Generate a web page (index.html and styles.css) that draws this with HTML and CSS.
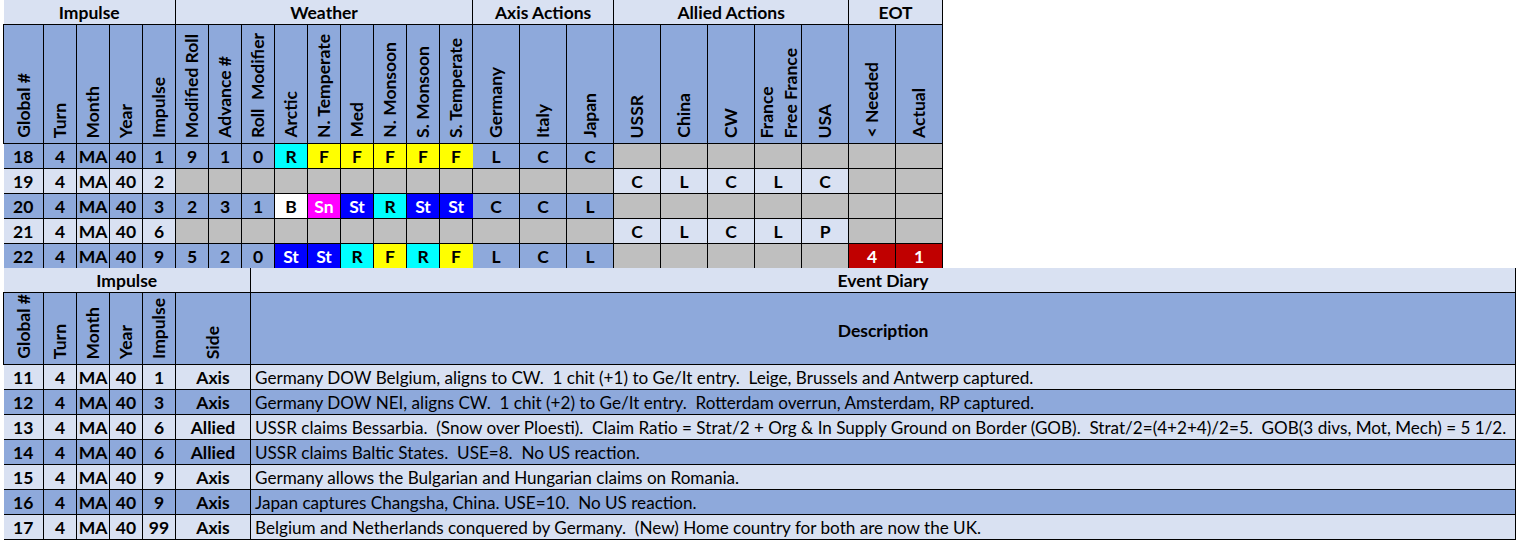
FILE: index.html
```html
<!DOCTYPE html>
<html>
<head>
<meta charset="utf-8">
<link rel="stylesheet" href="styles.css">
</head>
<body>
<div class="sheet">
<table class="grid top">
  <colgroup>
    <col class="w40"><col class="w33" span="13"><col class="w47" span="10">
  </colgroup>
  <tr class="grp">
    <th colspan="5">Impulse</th><th colspan="9">Weather</th><th colspan="3">Axis Actions</th><th colspan="5">Allied Actions</th><th colspan="2">EOT</th>
  </tr>
  <tr class="hdr">
    <th><span class="v">Global #</span></th>
    <th><span class="v">Turn</span></th>
    <th><span class="v">Month</span></th>
    <th><span class="v">Year</span></th>
    <th><span class="v">Impulse</span></th>
    <th><span class="v">Modified Roll</span></th>
    <th><span class="v">Advance #</span></th>
    <th><span class="v">Roll  Modifier</span></th>
    <th><span class="v">Arctic</span></th>
    <th><span class="v">N. Temperate</span></th>
    <th><span class="v">Med</span></th>
    <th><span class="v">N. Monsoon</span></th>
    <th><span class="v">S. Monsoon</span></th>
    <th><span class="v">S. Temperate</span></th>
    <th><span class="v">Germany</span></th>
    <th><span class="v">Italy</span></th>
    <th><span class="v">Japan</span></th>
    <th><span class="v">USSR</span></th>
    <th><span class="v">China</span></th>
    <th><span class="v">CW</span></th>
    <th><span class="v two">France<br>Free France</span></th>
    <th><span class="v">USA</span></th>
    <th><span class="v">&lt; Needed</span></th>
    <th><span class="v">Actual</span></th>
  </tr>
  <tr class="row">
    <td class="m">18</td><td class="m">4</td><td class="m">MA</td><td class="m">40</td><td class="m">1</td>
    <td class="m">9</td><td class="m">1</td><td class="m">0</td>
    <td class="cy">R</td><td class="ye">F</td><td class="ye">F</td><td class="ye">F</td><td class="ye">F</td><td class="ye edge-ye">F</td>
    <td class="m">L</td><td class="m">C</td><td class="m">C</td>
    <td class="g"></td><td class="g"></td><td class="g"></td><td class="g"></td><td class="g"></td>
    <td class="g"></td><td class="g"></td>
  </tr>
  <tr class="row">
    <td class="l">19</td><td class="l">4</td><td class="l">MA</td><td class="l">40</td><td class="l">2</td>
    <td class="g"></td><td class="g"></td><td class="g"></td>
    <td class="g"></td><td class="g"></td><td class="g"></td><td class="g"></td><td class="g"></td><td class="g"></td>
    <td class="g"></td><td class="g"></td><td class="g"></td>
    <td class="l">C</td><td class="l">L</td><td class="l">C</td><td class="l">L</td><td class="l">C</td>
    <td class="g"></td><td class="g"></td>
  </tr>
  <tr class="row">
    <td class="m">20</td><td class="m">4</td><td class="m">MA</td><td class="m">40</td><td class="m">3</td>
    <td class="m">2</td><td class="m">3</td><td class="m">1</td>
    <td class="wh">B</td><td class="mg">Sn</td><td class="bl">St</td><td class="cy">R</td><td class="bl">St</td><td class="bl edge-bl">St</td>
    <td class="m">C</td><td class="m">C</td><td class="m">L</td>
    <td class="g"></td><td class="g"></td><td class="g"></td><td class="g"></td><td class="g"></td>
    <td class="g"></td><td class="g"></td>
  </tr>
  <tr class="row">
    <td class="l">21</td><td class="l">4</td><td class="l">MA</td><td class="l">40</td><td class="l">6</td>
    <td class="g"></td><td class="g"></td><td class="g"></td>
    <td class="g"></td><td class="g"></td><td class="g"></td><td class="g"></td><td class="g"></td><td class="g"></td>
    <td class="g"></td><td class="g"></td><td class="g"></td>
    <td class="l">C</td><td class="l">L</td><td class="l">C</td><td class="l">L</td><td class="l">P</td>
    <td class="g"></td><td class="g"></td>
  </tr>
  <tr class="row last">
    <td class="m">22</td><td class="m">4</td><td class="m">MA</td><td class="m">40</td><td class="m">9</td>
    <td class="m">5</td><td class="m">2</td><td class="m">0</td>
    <td class="bl">St</td><td class="bl">St</td><td class="cy">R</td><td class="ye">F</td><td class="cy">R</td><td class="ye edge-ye">F</td>
    <td class="m">L</td><td class="m">C</td><td class="m">L</td>
    <td class="g"></td><td class="g"></td><td class="g"></td><td class="g"></td><td class="g"></td>
    <td class="rd">4</td><td class="rd">1</td>
  </tr>
</table>

<table class="grid bottom">
  <colgroup>
    <col class="w40"><col class="w33" span="4"><col class="w75"><col class="wdesc">
  </colgroup>
  <tr class="grp">
    <th colspan="6">Impulse</th><th>Event Diary</th>
  </tr>
  <tr class="hdr2">
    <th><span class="v">Global #</span></th>
    <th><span class="v">Turn</span></th>
    <th><span class="v">Month</span></th>
    <th><span class="v">Year</span></th>
    <th><span class="v">Impulse</span></th>
    <th><span class="v">Side</span></th>
    <th class="desc-h">Description</th>
  </tr>
  <tr class="row l">
    <td>11</td><td>4</td><td>MA</td><td>40</td><td>1</td><td>Axis</td>
    <td class="desc">Germany DOW Belgium, aligns to CW.  1 chit (+1) to Ge/It entry.  Leige, Brussels and Antwerp captured.</td>
  </tr>
  <tr class="row m">
    <td>12</td><td>4</td><td>MA</td><td>40</td><td>3</td><td>Axis</td>
    <td class="desc">Germany DOW NEI, aligns CW.  1 chit (+2) to Ge/It entry.  Rotterdam overrun, Amsterdam, RP captured.</td>
  </tr>
  <tr class="row l">
    <td>13</td><td>4</td><td>MA</td><td>40</td><td>6</td><td>Allied</td>
    <td class="desc">USSR claims Bessarbia.  (Snow over Ploesti).  Claim Ratio = Strat/2 + Org &amp; In Supply Ground on Border (GOB).  Strat/2=(4+2+4)/2=5.  GOB(3 divs, Mot, Mech) = 5 1/2.</td>
  </tr>
  <tr class="row m">
    <td>14</td><td>4</td><td>MA</td><td>40</td><td>6</td><td>Allied</td>
    <td class="desc">USSR claims Baltic States.  USE=8.  No US reaction.</td>
  </tr>
  <tr class="row l">
    <td>15</td><td>4</td><td>MA</td><td>40</td><td>9</td><td>Axis</td>
    <td class="desc">Germany allows the Bulgarian and Hungarian claims on Romania.</td>
  </tr>
  <tr class="row m">
    <td>16</td><td>4</td><td>MA</td><td>40</td><td>9</td><td>Axis</td>
    <td class="desc">Japan captures Changsha, China. USE=10.  No US reaction.</td>
  </tr>
  <tr class="row l">
    <td>17</td><td>4</td><td>MA</td><td>40</td><td>99</td><td>Axis</td>
    <td class="desc">Belgium and Netherlands conquered by Germany.  (New) Home country for both are now the UK.</td>
  </tr>
</table>
</div>
</body>
</html>
```

FILE: styles.css
```css
html, body {
  margin: 0;
  padding: 0;
  background: #ffffff;
}
body {
  font-family: "Lato", "Liberation Sans", sans-serif;
  color: #000;
}
.sheet {
  padding-left: 3px;
}
.grid {
  border-collapse: collapse;
  table-layout: fixed;
}
.grid th, .grid td {
  border: 1px solid #000;
  padding: 0;
  font-weight: 700;
  font-size: 17.5px;
  line-height: 20px;
  text-align: center;
  overflow: hidden;
  white-space: nowrap;
}
.top { width: 940px; }
.bottom { width: 1513px; }
.w40 { width: 40px; }
.w33 { width: 33px; }
.w47 { width: 47px; }
.w75 { width: 75px; }
.wdesc { width: 1265px; }

.grp th {
  background: #d9e1f2;
  height: 22px;
  padding-top: 2px;
  border-top: 0;
}
.top .grp th:first-child, .bottom .grp th:first-child { border-left: 0; }
.hdr th, .hdr2 th {
  background: #8ea9db;
  vertical-align: bottom;
  padding-bottom: 0;
}
.hdr th { height: 118px; }
.hdr2 th { height: 71px; }
.v {
  display: inline-block;
  writing-mode: vertical-rl;
  transform: rotate(180deg);
  text-align: left;
  line-height: 20px;
  white-space: pre;
  margin-bottom: 1px;
}
.v.two { line-height: 24px; }
.hdr2 .desc-h {
  vertical-align: middle;
  height: 67px;
  padding-top: 4px;
}
.row td {
  height: 23px;
  padding-top: 1px;
}
.top .row td:first-child, .bottom .row td:first-child { border-left: 0; }
.top .last td { border-bottom: 0; }

.m { background: #8ea9db; }
.l { background: #d9e1f2; }
.g { background: #bfbfbf; }
.cy { background: #00ffff; }
.ye { background: #ffff00; }
.wh { background: #ffffff; }
.mg { background: #ff00ff; color: #fff; }
.bl { background: #0000ff; color: #fff; }
.rd { background: #c00000; color: #fff; }
.edge-ye { border-right-color: #ffff00 !important; }
.edge-bl { border-right-color: #0000ff !important; }

.row.m td { background: #8ea9db; }
.row.l td { background: #d9e1f2; }
.row .desc {
  text-align: left;
  font-weight: 400;
  font-size: 17.1px;
  white-space: pre;
  padding-left: 4px;
}
```
